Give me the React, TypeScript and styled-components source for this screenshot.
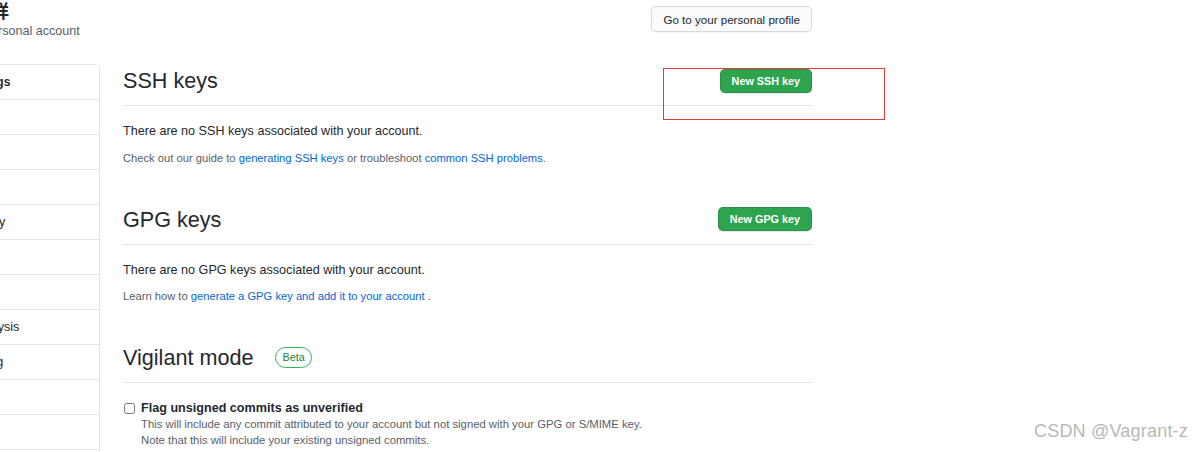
import React from 'react';
import styled, { createGlobalStyle } from 'styled-components';

const GlobalStyle = createGlobalStyle`
  html, body {
    margin: 0;
    padding: 0;
    background: #fff;
    overflow: hidden;
  }
  body {
    font-family: "Liberation Sans", "Noto Sans CJK SC", Arial, sans-serif;
    font-size: 12.6px;
    color: #24292e;
  }
  * {
    box-sizing: border-box;
  }
`;

const Screen = styled.div`
  position: relative;
  width: 1204px;
  height: 452px;
  overflow: hidden;
`;

const Container = styled.div`
  width: 914px;
  margin-left: -102px;
`;

const Header = styled.header`
  display: flex;
  justify-content: space-between;
  align-items: flex-start;
  height: 64px;
`;

const Identity = styled.div`
  display: flex;
  align-items: flex-start;
`;

const Avatar = styled.div`
  width: 43px;
  height: 43px;
  border-radius: 50%;
  background: #e1e4e8;
  margin-right: 14px;
  flex-shrink: 0;
`;

const NameBlock = styled.div`
  display: flex;
  flex-direction: column;
`;

const UserName = styled.div`
  font-size: 18px;
  font-weight: 700;
  line-height: 20px;
  margin-top: 2px;
`;

const AccountType = styled.div`
  font-size: 12.6px;
  line-height: 18px;
  color: #586069;
`;

const Button = styled.button<{ $primary?: boolean }>`
  font-family: inherit;
  display: inline-flex;
  align-items: center;
  justify-content: center;
  border-radius: 5px;
  border: 1px solid rgba(27, 31, 35, 0.15);
  cursor: pointer;
  white-space: nowrap;
  background: ${p => (p.$primary ? '#2ea44f' : '#fafbfc')};
  color: ${p => (p.$primary ? '#ffffff' : '#24292e')};
  font-weight: ${p => (p.$primary ? 700 : 400)};
  font-size: ${p => (p.$primary ? '10.8px' : '11.6px')};
  height: ${p => (p.$primary ? '24px' : '26px')};
  padding: 0 11px;
  box-shadow: ${p =>
    p.$primary ? '0 1px 0 rgba(27,31,35,0.1)' : '0 1px 0 rgba(27,31,35,0.04)'};
`;

const ProfileButton = styled(Button)`
  margin-top: 6px;
`;

const Layout = styled.div`
  display: flex;
  gap: 23px;
  align-items: flex-start;
`;

const Sidebar = styled.nav`
  width: 202px;
  flex-shrink: 0;
  border: 1px solid #e1e4e8;
  border-radius: 6px;
  background: #fff;
`;

const MenuItem = styled.div<{ $heading?: boolean }>`
  padding: 7px 14px;
  line-height: 20px;
  white-space: nowrap;
  color: #24292e;
  border-bottom: 1px solid #e1e4e8;
  font-size: ${p => (p.$heading ? '12px' : '12.6px')};
  font-weight: ${p => (p.$heading ? 700 : 400)};
`;

const Content = styled.main`
  width: 689px;
`;

const Subhead = styled.div<{ $spacious?: boolean }>`
  display: flex;
  align-items: center;
  justify-content: space-between;
  padding-bottom: 8px;
  border-bottom: 1px solid #e1e4e8;
  margin-top: ${p => (p.$spacious ? '37px' : '0')};
  margin-bottom: 15px;
`;

const SubheadTitle = styled.h2`
  margin: 0;
  font-size: 21.6px;
  font-weight: 400;
  line-height: 33px;
  display: flex;
  align-items: center;
`;

const Label = styled.span`
  display: inline-flex;
  align-items: center;
  height: 21px;
  padding: 0 6px;
  margin-left: 22px;
  border: 1px solid #34b15a;
  border-radius: 11px;
  color: #22863a;
  font-size: 10.8px;
  line-height: 1;
`;

const Blank = styled.p`
  margin: 0;
  font-size: 12.6px;
  line-height: 20px;
`;

const Note = styled.p`
  margin: 8.5px 0 0;
  font-size: 11.2px;
  line-height: 16px;
  color: #586069;
`;

const Link = styled.a`
  color: #0366d6;
  text-decoration: none;
`;

const FormCheckbox = styled.div`
  display: flex;
  align-items: flex-start;
  gap: 6px;
  padding-top: 2px;
`;

const Checkbox = styled.input`
  width: 11px;
  height: 11px;
  margin: 3px 0 0 1px;
  flex-shrink: 0;
`;

const CheckboxBody = styled.div`
  display: flex;
  flex-direction: column;
`;

const CheckboxLabel = styled.label`
  font-weight: 700;
  font-size: 12.6px;
  line-height: 16px;
`;

const CheckboxNote = styled.div`
  font-size: 11.3px;
  line-height: 16px;
  color: #586069;
`;

const Annotation = styled.div`
  position: absolute;
  left: 663px;
  top: 68px;
  width: 222px;
  height: 52px;
  border: 1px solid #e8383b;
  pointer-events: none;
`;

const Watermark = styled.div`
  position: absolute;
  right: 16px;
  bottom: 10px;
  font-size: 18px;
  line-height: 22px;
  color: #b8b8b8;
  letter-spacing: 0.2px;
`;

const menu = [
  'Account settings',
  'Profile',
  'Account',
  'Appearance',
  'Account security',
  'Billing & plans',
  'Security log',
  'Security & analysis',
  'Sponsorship log',
  'Emails',
  'Notifications',
  'Scheduled reminders',
];

const App: React.FC = () => {
  return (
    <Screen>
      <GlobalStyle />
      <Container>
        <Header>
          <Identity>
            <Avatar />
            <NameBlock>
              <UserName>王吉祥</UserName>
              <AccountType>Your personal account</AccountType>
            </NameBlock>
          </Identity>
          <ProfileButton>Go to your personal profile</ProfileButton>
        </Header>

        <Layout>
          <Sidebar>
            {menu.map((item, i) => (
              <MenuItem key={item} $heading={i === 0}>
                {item}
              </MenuItem>
            ))}
          </Sidebar>

          <Content>
            <Subhead>
              <SubheadTitle>SSH keys</SubheadTitle>
              <Button $primary>New SSH key</Button>
            </Subhead>
            <Blank>There are no SSH keys associated with your account.</Blank>
            <Note>
              Check out our guide to <Link href="#">generating SSH keys</Link> or troubleshoot{' '}
              <Link href="#">common SSH problems</Link>.
            </Note>

            <Subhead $spacious>
              <SubheadTitle>GPG keys</SubheadTitle>
              <Button $primary>New GPG key</Button>
            </Subhead>
            <Blank>There are no GPG keys associated with your account.</Blank>
            <Note>
              Learn how to <Link href="#">generate a GPG key and add it to your account</Link> .
            </Note>

            <Subhead $spacious>
              <SubheadTitle>
                Vigilant mode <Label>Beta</Label>
              </SubheadTitle>
            </Subhead>
            <FormCheckbox>
              <Checkbox type="checkbox" id="vigilant" />
              <CheckboxBody>
                <CheckboxLabel htmlFor="vigilant">Flag unsigned commits as unverified</CheckboxLabel>
                <CheckboxNote>
                  This will include any commit attributed to your account but not signed with your GPG or S/MIME key.
                </CheckboxNote>
                <CheckboxNote>Note that this will include your existing unsigned commits.</CheckboxNote>
              </CheckboxBody>
            </FormCheckbox>
          </Content>
        </Layout>
      </Container>
      <Annotation />
      <Watermark>CSDN @Vagrant-z</Watermark>
    </Screen>
  );
};

export default App;
